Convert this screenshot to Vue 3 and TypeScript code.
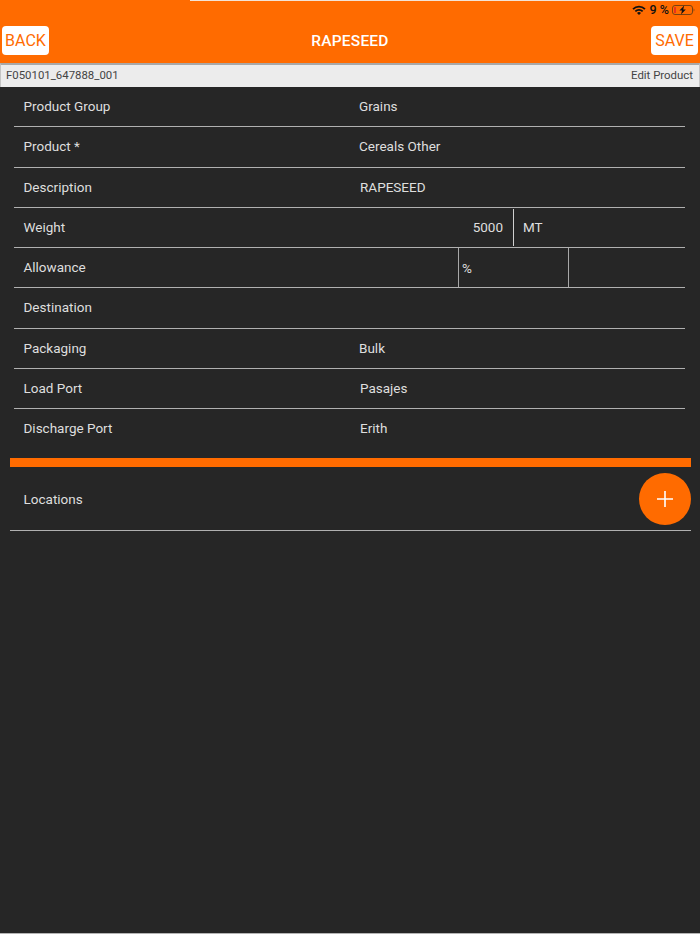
<script setup lang="ts">
interface Row { label: string; value?: string; left?: number; kind?: string }
const rows: Row[] = [
  { label: 'Product Group', value: 'Grains', left: 359 },
  { label: 'Product *', value: 'Cereals Other', left: 359 },
  { label: 'Description', value: 'RAPESEED', left: 360 },
  { label: 'Weight', kind: 'weight' },
  { label: 'Allowance', kind: 'allowance' },
  { label: 'Destination' },
  { label: 'Packaging', value: 'Bulk', left: 359 },
  { label: 'Load Port', value: 'Pasajes', left: 360 },
  { label: 'Discharge Port', value: 'Erith', left: 360 },
]
</script>

<template>
  <div class="page">
    <header class="top">
      <div class="progress"></div>
      <div class="status">
        <svg class="wifi" width="14" height="10" viewBox="0 0 14 10">
          <path d="M0.4 3.4A9.4 9.4 0 0 1 13.6 3.4L12.3 4.8A7.5 7.5 0 0 0 1.7 4.8Z" fill="#111"/>
          <path d="M2.7 5.7A6.1 6.1 0 0 1 11.3 5.7L10 7A4.2 4.2 0 0 0 4 7Z" fill="#111"/>
          <path d="M5 7.9A2.9 2.9 0 0 1 9 7.9L7 10Z" fill="#111"/>
        </svg>
        <span class="pct">9 %</span>
        <svg class="batt" width="23" height="10" viewBox="0 0 23 10">
          <rect x="0.5" y="0.5" width="20" height="9" rx="2.5" fill="none" stroke="#7a4210" stroke-width="1"/>
          <rect x="2" y="2" width="2" height="6" rx="0.6" fill="#e8321e"/>
          <path d="M21.6 3.4C22.6 3.7 22.6 6.3 21.6 6.6Z" fill="#7a4210"/>
          <path d="M12.2 0.6 L7.4 5.6 H10 L9 9.4 L13.8 4.4 H11.2 Z" fill="#111"/>
        </svg>
      </div>
      <div class="nav">
        <button class="btn">BACK</button>
        <div class="title">RAPESEED</div>
        <button class="btn">SAVE</button>
      </div>
    </header>
    <div class="sub">
      <span>F050101_647888_001</span>
      <span>Edit Product</span>
    </div>
    <main class="list">
      <div v-for="r in rows" :key="r.label" class="row">
        <span class="label">{{ r.label }}</span>
        <span v-if="r.value" class="value" :style="{ left: (r.left! - 14) + 'px' }">{{ r.value }}</span>
        <template v-if="r.kind === 'weight'">
          <div class="weight-num">5000</div>
          <div class="weight-unit">MT</div>
        </template>
        <div v-if="r.kind === 'allowance'" class="allow-pct">%</div>
      </div>
    </main>
    <div class="bar"></div>
    <section class="loc">
      <span class="label">Locations</span>
      <button class="fab" aria-label="Add location">
        <svg width="18" height="18" viewBox="0 0 18 18">
          <path d="M9 1V17M1 9H17" stroke="#fff" stroke-width="1.6" fill="none"/>
        </svg>
      </button>
    </section>
  </div>
</template>

<style>
html, body { margin: 0; background: #262626; }
</style>

<style scoped>
.page {
  width: 700px;
  height: 934px;
  box-sizing: border-box;
  background: #262626;
  border-bottom: 1px solid #b4b4b4;
  font-family: Roboto, "Liberation Sans", sans-serif;
  font-size: 13.5px;
  color: #dedede;
  overflow: hidden;
}
.top {
  position: relative;
  height: 63px;
  background: #ff6b00;
}
.progress {
  position: absolute;
  left: 190px;
  right: 0;
  top: 0;
  height: 1px;
  background: #f3e3d6;
}
.status {
  height: 19px;
  display: flex;
  align-items: center;
  justify-content: flex-end;
  gap: 3px;
  padding-right: 5px;
}
.wifi { margin-right: 1px; }
.pct { font-size: 12.5px; font-weight: 500; color: #111; }
.nav {
  height: 29px;
  padding: 7px 2px 0;
  display: flex;
  align-items: center;
  justify-content: space-between;
}
.btn {
  width: 47px;
  height: 29px;
  padding: 0;
  border: 0;
  border-radius: 4px;
  background: #fff;
  color: #ff6b00;
  font-family: Roboto, "Liberation Sans", sans-serif;
  font-size: 16px;
  font-weight: 400;
}
.title {
  font-family: Roboto, "Liberation Sans", sans-serif;
  font-weight: 500;
  font-size: 15.5px;
  color: #fff;
  letter-spacing: 0.2px;
}
.sub {
  height: 24px;
  box-sizing: border-box;
  padding: 0 6px 2px 5px;
  display: flex;
  align-items: center;
  justify-content: space-between;
  background: #ececec;
  border-top: 2px solid #a8a8a8;
  border-left: 1px solid #c4c4c4;
  border-right: 1px solid #c4c4c4;
  font-size: 11.4px;
  color: #444;
}
.list { margin: 0 15px 0 14px; }
.row {
  position: relative;
  height: 39.25px;
  border-bottom: 1px solid #b0b0b0;
  display: flex;
  align-items: center;
  padding: 0 0 1px 9.5px;
  box-sizing: content-box;
  height: 38.25px;
}
.row:last-child { border-bottom: 0; }
.value { position: absolute; top: 11px; }
.weight-num {
  position: absolute;
  left: 0;
  width: 489px;
  text-align: right;
}
.weight-unit {
  position: absolute;
  left: 499px;
  top: 1px;
  bottom: 1px;
  border-left: 1px solid #d0d0d0;
  padding-left: 9px;
  display: flex;
  align-items: center;
}
.allow-pct {
  position: absolute;
  left: 444px;
  top: 0;
  bottom: 0;
  width: 106px;
  padding-left: 3px;
  border-left: 1px solid #a8a8a8;
  border-right: 1px solid #a8a8a8;
  display: flex;
  align-items: center;
}
.bar {
  height: 9px;
  margin: 10px 9.5px 0;
  background: #ff6b00;
}
.loc {
  height: 63px;
  margin: 0 9.5px;
  padding-left: 14px;
  border-bottom: 1px solid #b0b0b0;
  display: flex;
  align-items: center;
  justify-content: space-between;
}
.fab {
  width: 52px;
  height: 52px;
  padding: 0;
  border: 0;
  border-radius: 50%;
  background: #ff6b00;
  display: flex;
  align-items: center;
  justify-content: center;
}
</style>
